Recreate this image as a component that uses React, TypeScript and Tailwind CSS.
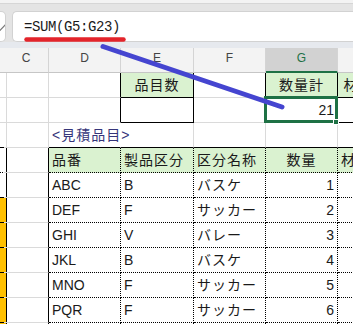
import React from 'react';

interface CellProps {
  children?: React.ReactNode;
  className?: string;
}

// one spreadsheet cell; border colours are passed per side
function Cell({ children, className = '' }: CellProps) {
  return (
    <div className={`h-[25px] border-r border-b flex items-center px-[3px] whitespace-nowrap ${className}`}>
      {children}
    </div>
  );
}

const items: [string, string, string, number][] = [
  ['ABC', 'B', 'バスケ', 1],
  ['DEF', 'F', 'サッカー', 2],
  ['GHI', 'V', 'バレー', 3],
  ['JKL', 'B', 'バスケ', 4],
  ['MNO', 'F', 'サッカー', 5],
  ['PQR', 'F', 'サッカー', 6],
];

export default function App() {
  return (
    <div className="relative w-[353px] h-[324px] overflow-hidden bg-white text-[#1a1a1a] [font-family:'Liberation_Sans','Noto_Sans_CJK_JP',sans-serif]">
      {/* Ribbon edge */}
      <div className="h-[3px] bg-[#f3f3f3]" />
      <div className="h-[8px] bg-[#e4e4e4] border-t border-[#d6d6d6]" />

      {/* Formula bar */}
      <div className="flex h-[31px] bg-[#e4e4e4]">
        <div className="relative w-[6px] bg-white rounded-r-[5px] border border-l-0 border-[#d2d2d2] overflow-hidden">
          <svg className="absolute left-[-5px] top-[11px]" width="12" height="9" viewBox="0 0 12 9">
            <polyline points="1,4.5 4.5,8 11,1" fill="none" stroke="#7a7a7a" strokeWidth="1.2" />
          </svg>
        </div>
        <div className="flex-1 ml-[6px] bg-white rounded-l-[5px] border border-r-0 border-[#d2d2d2] pl-[11px] pt-[2px] flex items-center">
          <span className="text-[14px] tracking-[-0.4px] leading-[15px] text-[#1a1a1a] [font-family:'Liberation_Mono',monospace]">
            =SUM(G5:G23)
          </span>
        </div>
      </div>
      <div className="h-[6px] bg-[#e6e9ee]" />

      {/* Sheet */}
      <div className="relative w-[410px]">
        {/* Column headers */}
        <div className="grid grid-cols-[4px_45px_72px_73px_72px_72px_72px] bg-[#f3f3f3] text-[12px] leading-[14px] text-[#444]">
          <div className="h-[25px] border-b border-b-[#c6c6c6]" />
          {['C', 'D', 'E', 'F'].map((c) => (
            <div key={c} className="h-[25px] border-r border-b border-r-[#d4d4d4] border-b-[#c6c6c6] flex justify-center pt-[3px]">
              {c}
            </div>
          ))}
          <div className="h-[25px] bg-[#d2d2d2] border-r border-b-2 border-r-[#d4d4d4] border-b-[#1e7145] flex justify-center pt-[3px] text-[#1e7145]">
            G
          </div>
          <div className="h-[25px] border-r border-b border-r-[#d4d4d4] border-b-[#c6c6c6]" />
        </div>

        <div className="grid grid-cols-[4px_45px_72px_73px_72px_72px_72px] text-[14px] leading-[16px]">
          {/* row 3 */}
          <Cell className="px-0 border-r-[#dadada] border-b-[#dadada]" />
          <Cell className="border-r-[#dadada] border-b-[#dadada]" />
          <Cell className="border-r-black border-b-[#dadada]" />
          <Cell className="justify-center tracking-[1px] bg-[#daf2d0] border-r-black border-b-black">品目数</Cell>
          <Cell className="border-r-black border-b-[#dadada]" />
          <Cell className="justify-center tracking-[1px] bg-[#daf2d0] border-r-black border-b-black">数量計</Cell>
          <Cell className="justify-center tracking-[1px] bg-[#daf2d0] border-r-black border-b-black">材料合計</Cell>

          {/* row 4 */}
          <Cell className="px-0 border-r-[#dadada] border-b-[#dadada]" />
          <Cell className="border-r-[#dadada] border-b-[#dadada]" />
          <Cell className="border-r-black border-b-[#dadada]" />
          <Cell className="border-r-black border-b-black" />
          <Cell className="border-r-black border-b-[#dadada]" />
          <Cell className="justify-end border-r-black border-b-black">21</Cell>
          <Cell className="border-r-black border-b-black" />

          {/* row 5 */}
          <Cell className="px-0 border-r-[#dadada] border-b-black" />
          <Cell className="border-r-[#dadada] border-b-[#dadada]" />
          <Cell className="tracking-[1px] text-[#35357a] border-r-transparent border-b-black">&lt;見積品目&gt;</Cell>
          <Cell className="border-r-[#dadada] border-b-black" />
          <Cell className="border-r-[#dadada] border-b-black" />
          <Cell className="border-r-[#dadada] border-b-black" />
          <Cell className="border-r-[#dadada] border-b-black" />

          {/* table header */}
          <Cell className="px-0 border-r-black border-b-black [border-bottom-style:dotted]" />
          <Cell className="border-r-black border-b-[#dadada]" />
          <Cell className="tracking-[1px] bg-[#daf2d0] border-dotted border-r-black border-b-black">品番</Cell>
          <Cell className="tracking-[1px] bg-[#daf2d0] border-dotted border-r-black border-b-black">製品区分</Cell>
          <Cell className="tracking-[1px] bg-[#daf2d0] border-dotted border-r-black border-b-black">区分名称</Cell>
          <Cell className="justify-center tracking-[1px] bg-[#daf2d0] border-dotted border-r-black border-b-black">数量</Cell>
          <Cell className="tracking-[1px] bg-[#daf2d0] border-dotted border-r-black border-b-black">材質</Cell>

          {/* table rows */}
          {items.map(([code, kind, name, qty], i) => (
            <React.Fragment key={code}>
              <Cell className={`px-0 border-r-black border-b-black ${i > 0 ? 'bg-[#ffc000]' : ''}`} />
              <Cell className="border-r-black border-b-[#dadada]" />
              <Cell className="border-dotted border-r-black border-b-black">{code}</Cell>
              <Cell className="border-dotted border-r-black border-b-black">{kind}</Cell>
              <Cell className="tracking-[1px] border-dotted border-r-black border-b-black">{name}</Cell>
              <Cell className="justify-end border-dotted border-r-black border-b-black">{qty}</Cell>
              <Cell className="border-dotted border-r-black border-b-black" />
            </React.Fragment>
          ))}

          {/* next row, cut off */}
          <Cell className="px-0 bg-[#ffc000] border-r-black border-b-black" />
          <Cell className="border-r-black border-b-[#dadada]" />
          <Cell className="border-dotted border-r-black border-b-black" />
          <Cell className="border-dotted border-r-black border-b-black" />
          <Cell className="border-dotted border-r-black border-b-black" />
          <Cell className="border-dotted border-r-black border-b-black" />
          <Cell className="border-dotted border-r-black border-b-black" />
        </div>

        {/* selected cell G4 */}
        <div className="absolute left-[264px] top-[48px] w-[74px] h-[27px] border-[3px] border-[#1e7145]" />
        <div className="absolute left-[333px] top-[71px] w-[6px] h-[6px] bg-[#1e7145] border border-white" />
      </div>

      {/* annotations */}
      <svg className="absolute inset-0 pointer-events-none" width="353" height="324" viewBox="0 0 353 324">
        <line x1="26.5" y1="39.5" x2="123.5" y2="39.5" stroke="#e3242b" strokeWidth="4.5" strokeLinecap="round" />
        <line x1="103" y1="46.5" x2="282" y2="107" stroke="#4545d0" strokeWidth="5" strokeLinecap="round" />
      </svg>
    </div>
  );
}
